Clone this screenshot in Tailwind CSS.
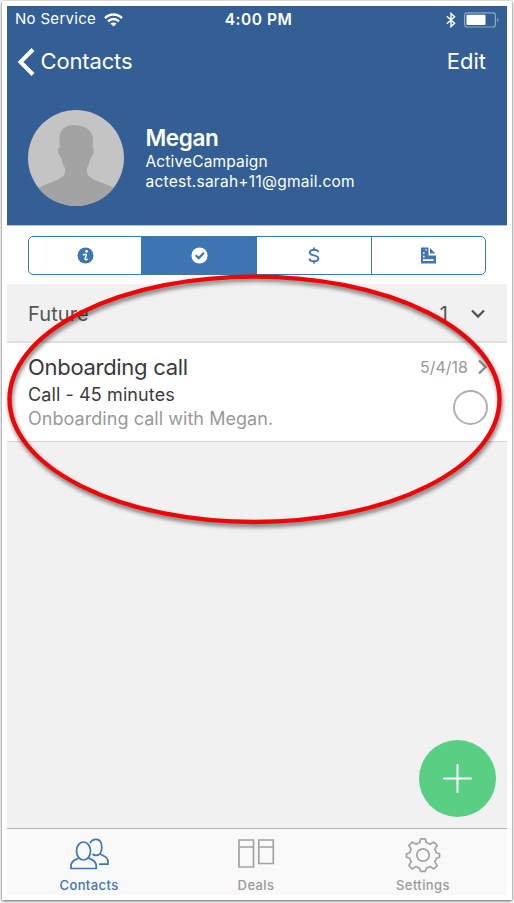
<!DOCTYPE html>
<html lang="en">
<head>
  <meta charset="UTF-8" />
  <title>Megan - Contacts</title>
  <meta name="viewport" content="width=device-width, initial-scale=1" />
  <script src="https://cdn.jsdelivr.net/npm/@tailwindcss/browser@4"></script>
</head>
<body class="bg-white h-[903px] overflow-hidden pt-px pl-[2px] font-['Inter','Liberation_Sans',sans-serif]">

  <!-- Frame -->
  <div class="relative w-[510px] h-[899px] bg-white p-[5px] shadow-[0_0_1px_#aaa,0_1px_3px_#555]">
    <div class="w-[500px] h-[889px] flex flex-col bg-[#f1f1f1]">

      <!-- Header -->
      <header class="h-[220px] shrink-0 bg-[#335f94] text-white border-b border-[#a9c4e8]">
        <div class="grid grid-cols-3 items-center h-[27px] pl-[8px] pr-[7px]">
          <div class="flex items-center gap-[8px] text-[15px] tracking-[0.3px] whitespace-nowrap">
            <span>No Service</span>
            <svg class="w-[19px] h-[14px]" viewBox="0 0 19 14" fill="none" stroke="#fff" stroke-width="2.4">
              <path d="M1 5.1C5.8.3 13.2.3 18 5.1" />
              <path d="M4 8.3c3.200-3 7.800-3 11 0" />
              <path d="M9.500 13.600 6.400 10.500c1.900-1.500 4.300-1.500 6.200 0z" fill="#fff" stroke="none" />
            </svg>
          </div>
          <div class="text-center text-[15.500px] font-semibold tracking-[0.5px] pl-[2px]">4:00 PM</div>
          <div class="flex items-center justify-end gap-[8px]">
            <svg class="w-[10px] h-[16px]" viewBox="0 0 10 16" fill="none" stroke="#fff" stroke-width="1.4">
              <path d="M.8 4.300 8.600 11.300 5 14.600V1.400l3.600 3.300L.8 11.700" />
            </svg>
            <svg class="w-[36px] h-[16px]" viewBox="0 0 36 16">
              <rect x=".6" y=".8" width="30.800" height="14.200" rx="2.500" fill="none" stroke="#8fa9c9" stroke-width="1.200" />
              <rect x="2.500" y="2.700" width="19" height="10.400" rx=".8" fill="#fff" />
              <path d="M33.200 5.700c1.800.8 1.800 3.600 0 4.400z" fill="#8fa9c9" />
            </svg>
          </div>
        </div>
        <nav class="flex items-center justify-between h-[57px] pl-[10px] pr-[21px] text-[22px]">
          <a class="flex items-center gap-[5.500px]">
            <svg class="w-[18px] h-[28px]" viewBox="0 0 18 28" fill="none" stroke="#fff" stroke-width="4">
              <path d="M16 1.500 3.500 14 16 26.500" />
            </svg>
            <span class="tracking-[-0.15px]">Contacts</span>
          </a>
          <a>Edit</a>
        </nav>
        <div class="flex pt-[19px] pl-[20px]">
          <svg class="w-[98px] h-[98px]" viewBox="0 0 98 98">
            <clipPath id="face"><circle cx="49" cy="49" r="48" /></clipPath>
            <circle cx="49" cy="49" r="48" fill="#c4c4c4" />
            <path clip-path="url(#face)" fill="#a3a3a3" d="M33 38c-1.500-8-.5-14 3-18 1-1.500 2-2 4-2.500 3-2 7-1.500 11-1 10 1 15 7 15 15l-.5 7c2 0 1.500 3 .5 7-.5 2-1.500 2.500-2 2.500-1 5-2.500 8-4 11v5c1 4 7 7 14 9.500 8 2.500 12 5 16 8V98H8V82c4-4 9-6 16-8.500 7-2.500 13-5.500 14-9.500v-5c-2-3-3-6-4-11-1.500 0-2.500-3-3-6-.3-2.500.5-4 2-4z" />
          </svg>
          <div class="pl-[20.500px] pt-[15px]">
            <h1 class="text-[22.500px] leading-[28px] font-semibold tracking-[-0.4px]">Megan</h1>
            <p class="text-[15.500px] leading-[19px] tracking-[0.15px]">ActiveCampaign</p>
            <p class="text-[15.500px] leading-[21px] tracking-[0.25px]">actest.sarah+11@gmail.com</p>
          </div>
        </div>
      </header>

      <!-- Segmented control -->
      <div class="h-[58px] shrink-0 bg-white pt-[10px] pl-[21px]">
        <div class="grid grid-cols-[112px_116px_115px_113px] w-[458px] h-[39px] border border-[#3e75b3] rounded-[5px] overflow-hidden">
          <button class="flex items-center justify-center">
            <svg class="w-[17px] h-[17px]" viewBox="0 0 17 17">
              <circle cx="8.500" cy="8.500" r="8" fill="#3e75b3" />
              <circle cx="9.600" cy="4.300" r="1.400" fill="#fff" />
              <path d="M6 8.200c1.500-1.300 3.600-1.600 3.200.2l-1.100 3.200c-.4 1.700 1.300 1.300 2.500.1" fill="none" stroke="#fff" stroke-width="1.500" />
            </svg>
          </button>
          <button class="flex items-center justify-center bg-[#3e75b3]">
            <svg class="w-[17px] h-[17px]" viewBox="0 0 17 17">
              <circle cx="8.500" cy="8.500" r="8.100" fill="#fff" />
              <path d="m4.700 8.300 3 2.800 5.200-5.300" fill="none" stroke="#3e75b3" stroke-width="2.200" />
            </svg>
          </button>
          <button class="flex items-center justify-center border-r border-[#3e75b3]">
            <svg class="w-[12px] h-[17px]" viewBox="0 0 12 17" fill="none" stroke="#3e75b3" stroke-width="1.900">
              <path d="M10.200 5.300C10.200 3.600 8.500 2.800 6 2.800S1.800 3.700 1.800 5.500C1.800 7.400 3.500 7.900 6 8.400s4.400 1.100 4.400 3.100c0 1.900-1.900 2.700-4.400 2.700s-4.500-.9-4.500-2.800M6 .5v2.300M6 14v2.500" />
            </svg>
          </button>
          <button class="flex items-center justify-center">
            <svg class="w-[15px] h-[17px]" viewBox="0 0 15 17">
              <path fill="#3e75b3" d="M0 .5h7.500v8H15v8H0z" />
              <path fill="#3e75b3" d="M9 1v5.500h5.300z" />
              <path fill="#fff" d="M2 5.200h1.600v1.600H2zM2 8.800h1.600v1.600H2zM2 12.200h10.600v1.900H2zM4.500 2.200h1.400v1.400H4.500z" />
            </svg>
          </button>
        </div>
      </div>

      <!-- Section header -->
      <div class="flex items-center h-[59px] shrink-0 pt-[2px] px-[21px] text-[20px] text-[#555] border-b-2 border-[#e0e0e0]">
        <span class="tracking-[0.1px]">Future</span>
        <span class="ml-auto mr-[22px]">1</span>
        <svg class="w-[16px] h-[10px]" viewBox="0 0 16 10" fill="none" stroke="#555" stroke-width="2.300">
          <path d="m2 1.500 6 6 6-6" />
        </svg>
      </div>

      <!-- Task row -->
      <div class="flex justify-between h-[99px] shrink-0 bg-white pl-[21px] pr-[19px] border-b border-[#d5d5d5]">
        <div class="pt-[10px]">
          <h2 class="text-[22px] leading-[28px] tracking-[-0.3px] text-[#3a3a3a]">Onboarding call</h2>
          <p class="text-[18px] leading-[27px] tracking-[0.1px] text-[#3a3a3a]">Call - 45 minutes</p>
          <p class="text-[18px] leading-[22px] tracking-[0.05px] text-[#999]">Onboarding call with Megan.</p>
        </div>
        <div class="flex flex-col items-end pt-[13px]">
          <div class="flex items-center gap-[9px] h-[22px] text-[16px] text-[#999]">
            <span>5/4/18</span>
            <svg class="w-[11px] h-[16px]" viewBox="0 0 11 16" fill="none" stroke="#8e8e8e" stroke-width="2.300">
              <path d="m2 1.500 6.500 6.500L2 14.500" />
            </svg>
          </div>
          <div class="w-[35px] h-[35px] mt-[12px] rounded-full border-2 border-[#b0b0b0]"></div>
        </div>
      </div>

      <!-- Add button -->
      <div class="flex-1 flex items-end justify-end pr-[11px] pb-[11px]">
        <button class="flex items-center justify-center w-[77px] h-[77px] rounded-full bg-[#59cf83]">
          <svg class="w-[29px] h-[29px]" viewBox="0 0 29 29" stroke="#fff" stroke-width="2" stroke-linecap="round">
            <path d="M14.500 1v27M1 14.500h27" />
          </svg>
        </button>
      </div>

      <!-- Tab bar -->
      <footer class="grid grid-cols-[164px_170px_164px] h-[67px] shrink-0 bg-[#f9f9f9] border-t border-[#b5b5b5] text-[13px] font-medium tracking-[0.4px] text-[#999]">
        <a class="flex flex-col items-center pt-[9px] text-[#3e75b3]">
          <svg class="w-[40px] h-[34px]" viewBox="0 0 40 34" fill="none" stroke="#3e75b3" stroke-width="1.700">
            <ellipse cx="14.500" cy="13" rx="7" ry="9" />
            <path d="M10 19.800C8 22 2 21.500 2 28v2.500h25.200V28c0-6.500-5.600-6-7.700-8.200" />
            <path d="M21 5.200C22.500 2.500 24.500 1.300 27 1.300c4 0 5.800 3.600 5.800 8s-2 8-5.800 8c-1.300 0-2.500-.5-3.400-1.300M31 15.800c2 2.200 8 2 8 7.700v2.700H30" />
          </svg>
          <span class="mt-[5px] leading-[16px]">Contacts</span>
        </a>
        <a class="flex flex-col items-center pt-[9px]">
          <svg class="w-[38px] h-[34px]" viewBox="0 0 38 34" fill="none" stroke="#a3a3a3" stroke-width="1.700">
            <path d="M2 2h14.500v27H2zM2 9h14.500M21.800 2h14.500v23.500H21.800zM21.800 9h14.500" />
          </svg>
          <span class="mt-[5px] leading-[16px]">Deals</span>
        </a>
        <a class="flex flex-col items-center pt-[8px]">
          <svg class="w-[36px] h-[36px]" viewBox="0 0 36 36" fill="none" stroke="#a3a3a3" stroke-width="1.700" stroke-linejoin="round">
            <circle cx="18" cy="18" r="6.200" />
            <path d="M15.700 1.800h4.600l1.100 4q2 .5 3.500 1.500l4-2.200 3.200 3.200-2.300 4q1 1.500 1.500 3.500l3.200 1v3.400l-3.200 1q-.5 2-1.500 3.500l2.300 4-3.200 3.200-4-2.300q-1.500 1-3.500 1.500l-1.100 3.300h-4.600l-1.100-3.300q-2-.5-3.500-1.500l-4 2.300-3.200-3.200 2.300-4q-1-1.500-1.500-3.500l-3.200-1v-3.400l3.200-1q.5-2 1.500-3.500l-2.300-4 3.200-3.200 4 2.200q1.500-1 3.500-1.500z" />
          </svg>
          <span class="mt-[4px] leading-[16px]">Settings</span>
        </a>
      </footer>
    </div>

    <!-- Highlight ring -->
    <svg class="absolute left-0 top-[266px] w-[510px] h-[270px] pointer-events-none drop-shadow-[1px_3px_2px_rgba(0,0,0,0.55)]" viewBox="0 0 510 270" fill="none">
      <ellipse cx="252.500" cy="132.300" rx="245" ry="122.700" stroke="#ee0505" stroke-width="4.300" />
    </svg>
  </div>

</body>
</html>
